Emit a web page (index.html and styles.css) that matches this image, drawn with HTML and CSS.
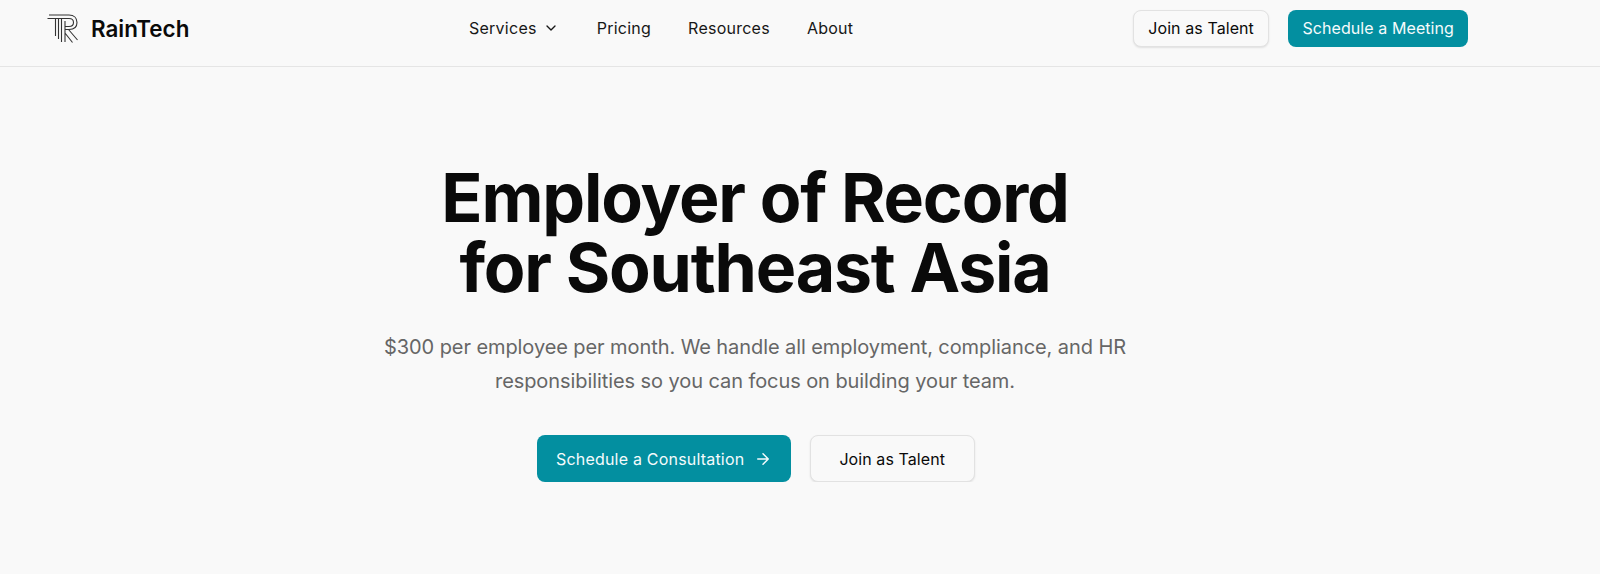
FILE: index.html
```html
<!DOCTYPE html>
<html lang="en">
<head>
    <meta charset="UTF-8">
    <meta name="viewport" content="width=device-width, initial-scale=1.0">
    <title>RainTech</title>
    <link rel="stylesheet" href="styles.css">
</head>
<body>
    <header class="site-header">
        <a class="brand" href="#">
            <svg class="brand-icon" viewBox="0 0 32 30" fill="none" stroke="#333" stroke-width="1.1">
                <path d="M0.500 5.500H13.500M2 2H22C27 2 30 5 30 9.500C30 14 27 16.500 22 16.500H18"/>
                <path d="M5 5.500H22C25 5.500 26.500 7 26.500 9.500C26.500 12 25 13.500 22 13.500H18"/>
                <path d="M8.500 6V23M11.500 6V26M14.500 6V29M18 8V29M21.500 16.500L30.500 27M18 20L25.500 29.500"/>
            </svg>
            <span class="brand-name">RainTech</span>
        </a>
        <nav class="main-nav">
            <a href="#">Services
                <svg class="chevron" viewBox="0 0 24 24" fill="none" stroke="currentColor" stroke-width="2" stroke-linecap="round" stroke-linejoin="round"><path d="M6 9l6 6 6-6"/></svg>
            </a>
            <a href="#">Pricing</a>
            <a href="#">Resources</a>
            <a href="#">About</a>
        </nav>
        <div class="header-actions">
            <a class="btn btn-outline" href="#">Join as Talent</a>
            <a class="btn btn-primary" href="#">Schedule a Meeting</a>
        </div>
    </header>

    <section class="hero">
        <h1>Employer of Record<br>for Southeast Asia</h1>
        <p>$300 per employee per month. We handle all employment, compliance, and HR<br>responsibilities so you can focus on building your team.</p>
        <div class="hero-actions">
            <a class="btn btn-primary btn-large" href="#">Schedule a Consultation
                <svg class="arrow" viewBox="0 0 24 24" fill="none" stroke="currentColor" stroke-width="2" stroke-linecap="round" stroke-linejoin="round"><path d="M5 12h14M12 5l7 7-7 7"/></svg>
            </a>
            <a class="btn btn-outline btn-large btn-talent" href="#">Join as Talent</a>
        </div>
    </section>
</body>
</html>
```
FILE: styles.css
```css
body {
    margin: 0;
    background-color: #f9f9f9;
    color: #0a0a0a;
    font-family: Inter, "Liberation Sans", sans-serif;
}
a {
    color: inherit;
    text-decoration: none;
}
.site-header {
    display: flex;
    align-items: center;
    box-sizing: border-box;
    height: 67px;
    padding: 0 132px 10px 47px;
    border-bottom: 1px solid #e5e5e5;
}
.brand {
    display: flex;
    align-items: center;
    gap: 12px;
    width: 422px;
}
.brand-icon {
    width: 32px;
    height: 30px;
}
.brand-name {
    font-size: 22.4px;
    font-weight: 600;
}
.main-nav {
    display: flex;
    align-items: center;
    gap: 37px;
    font-size: 16px;
    font-weight: 400;
    letter-spacing: 0.25px;
    color: #171717;
}
.main-nav a {
    display: flex;
    align-items: center;
    gap: 6px;
}
.chevron {
    width: 16px;
    height: 16px;
    margin-right: 1px;
}
.header-actions {
    display: flex;
    gap: 19px;
    margin-left: auto;
}
.btn {
    display: flex;
    align-items: center;
    justify-content: center;
    box-sizing: border-box;
    height: 37px;
    padding: 0 14px;
    border-radius: 8px;
    font-size: 16px;
    font-weight: 400;
    letter-spacing: 0.08px;
}
.btn-outline {
    padding: 0 14.500px;
    border: 1px solid #e2e2e2;
    background-color: #f9f9f9;
    box-shadow: 0 1px 2px rgba(0, 0, 0, 0.1);
}
.btn-primary {
    background-color: #038fa0;
    color: #f5fbfc;
}
.btn-large {
    height: 47px;
    padding: 0 18.500px;
}
.btn-primary.btn-large {
    letter-spacing: 0.2px;
}
.btn-talent {
    padding: 0 28.500px;
}
.arrow {
    width: 18px;
    height: 18px;
    margin-left: 10px;
}
.hero {
    display: flex;
    flex-direction: column;
    align-items: center;
    padding: 95px 90px 0 0;
    text-align: center;
}
.hero h1 {
    margin: 0;
    font-size: 68px;
    font-weight: 700;
    line-height: 70px;
    letter-spacing: -1.2px;
}
.hero p {
    margin: 28px 0 0;
    font-size: 20px;
    font-weight: 400;
    line-height: 34px;
    letter-spacing: -0.08px;
    color: #666;
}
.hero-actions {
    display: flex;
    gap: 19px;
    margin: 37px 0 0 2px;
}
```
